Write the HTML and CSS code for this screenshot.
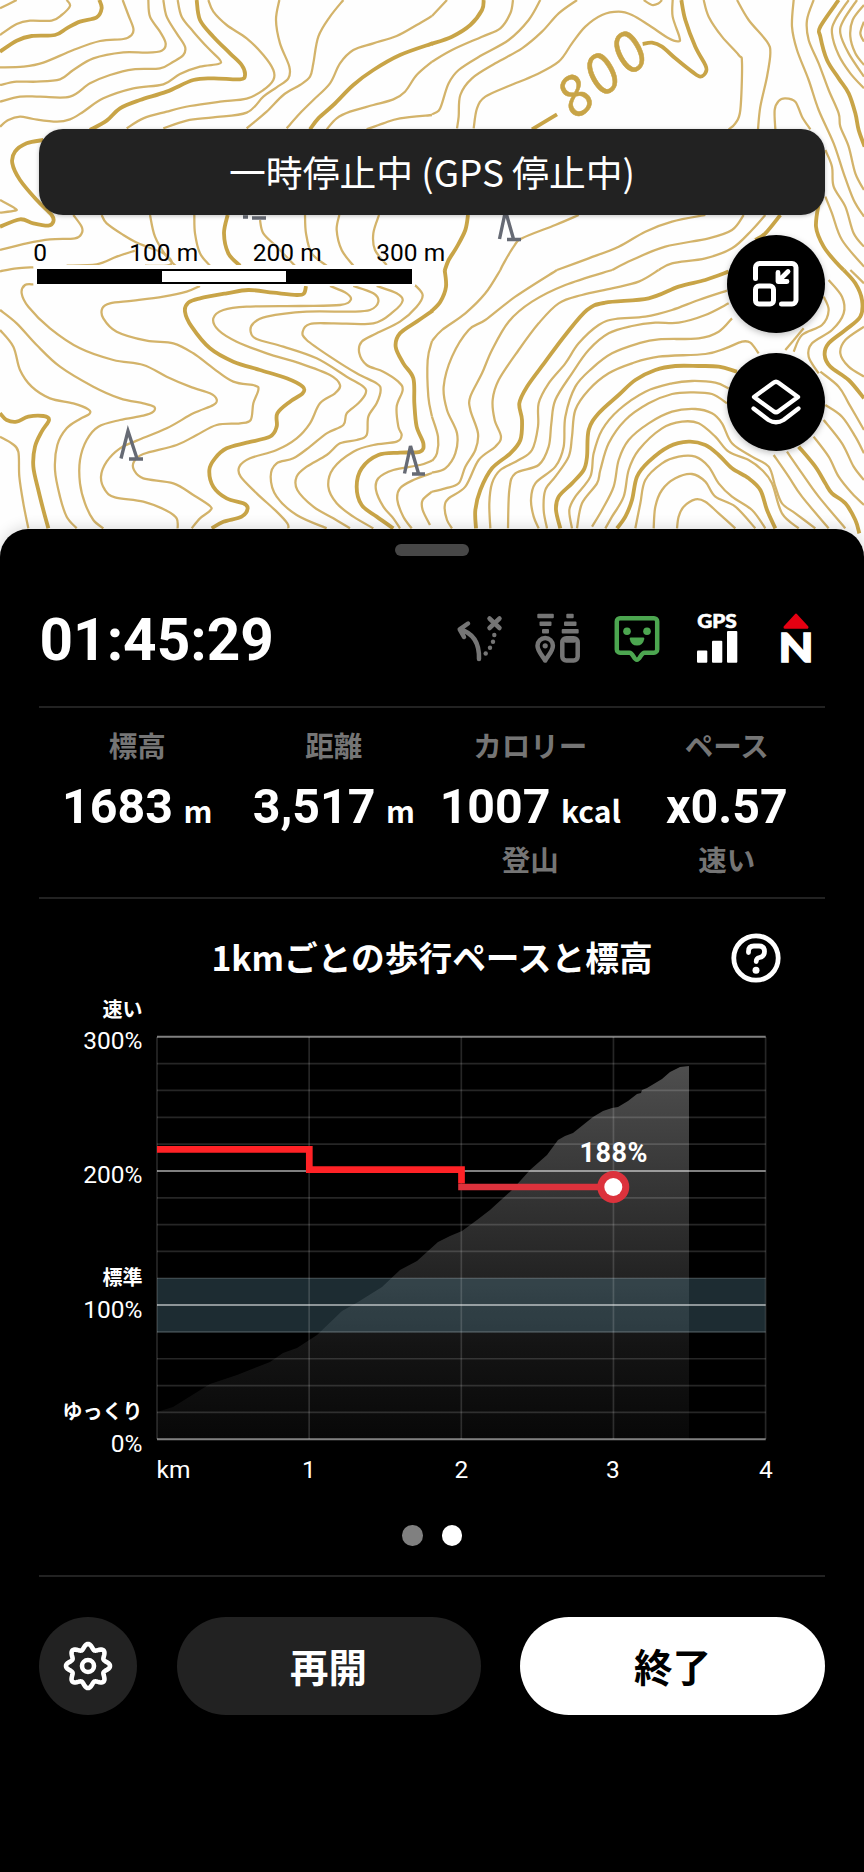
FILE: index.html
```html
<!DOCTYPE html>
<html lang="ja">
<head>
<meta charset="utf-8">
<meta name="viewport" content="width=device-width">
<title>活動記録</title>
<link rel="stylesheet" href="styles.css">
</head>
<body>
<main class="app">
  <section class="map">
    <svg class="map-canvas" viewBox="0 0 864 560" aria-hidden="true">
      <g id="contours"></g>
      <text class="contour-label" transform="translate(575 121) rotate(-39)">800</text>
      <g class="trees">
        <path d="M121 458.500L128 431L137 458.500M129 459H143"/>
        <path d="M404.500 473.500L410.500 446L418.500 473.500M412 474H425"/>
        <path d="M499.500 239L505.500 211L513.500 239M507 239.500H521"/>
        <path d="M243 217H248M252 218H266"/>
      </g>
    </svg>
    <div class="status-pill">一時停止中 (GPS 停止中)</div>
    <div class="map-tools">
      <div class="scale">
        <div class="scale-labels"><span>0</span><span>100 m</span><span>200 m</span><span>300 m</span></div>
        <div class="scale-track"><i></i><i class="light"></i><i></i></div>
      </div>
      <div class="fabs">
        <button class="fab" aria-label="縮小表示">
          <svg width="46" height="46" viewBox="0 0 46 46"><path d="M2.500 17.500V6.500a4 4 0 0 1 4-4h32.500a4 4 0 0 1 4 4v32.500a4 4 0 0 1-4 4H28.500"/><rect x="2.500" y="25" width="18" height="18" rx="3.500"/><path d="M35 10.500L25.500 20M25 11.500V20.500H34" stroke-width="4.800"/></svg>
        </button>
        <button class="fab" aria-label="レイヤー">
          <svg width="50" height="46" viewBox="0 0 50 46"><path d="M22.500 3.700a4 4 0 0 1 5 0L47 18 27.500 32.300a4 4 0 0 1-5 0L3 18Z" stroke-width="4.300"/><path d="M2.500 29.500L17.500 41Q25 45.500 32.500 41L47.500 29.500" stroke-width="4.300"/></svg>
        </button>
      </div>
    </div>
  </section>

  <section class="sheet">
    <div class="handle"></div>
    <header class="timer-row">
      <div class="timer">01:45:29</div>
      <div class="indicators">
        <svg class="muted" viewBox="0 0 56 56"><path d="M28 50C28.500 34 22 24 9 20.500M17 14.500L8.700 20.300L13 28" class="ln"/><path d="M38.500 9.500L48.500 19M48.500 9.500L38.500 19" class="ln"/><g class="fl"><circle cx="43.300" cy="26" r="2.200"/><circle cx="42" cy="32.700" r="2.200"/><circle cx="39" cy="38.700" r="2.200"/><circle cx="34.700" cy="44.500" r="2.200"/></g></svg>
        <svg class="muted" viewBox="0 0 56 56"><g class="fl"><rect x="7.300" y="4.800" width="16.500" height="4.500" rx="1"/><rect x="9.500" y="12.500" width="12" height="4.500" rx="1"/><rect x="12" y="20" width="7" height="4.500" rx="1"/><rect x="36.300" y="4.800" width="7.400" height="4.500" rx="1"/><rect x="34" y="12.500" width="12.500" height="4.500" rx="1"/><rect x="31.700" y="20" width="17" height="4.500" rx="1"/><circle cx="15.200" cy="36.800" r="2.600"/></g><path d="M15.200 51.500C12 46 7.500 42 7.500 36.700a7.700 7.700 0 0 1 15.400 0C22.900 42 18.500 46 15.200 51.500Z" class="ln" stroke-width="4"/><rect x="32.300" y="29.200" width="15.400" height="22.300" rx="4" class="ln" stroke-width="4"/><path d="M36 31.500H44" class="ln" stroke-width="3"/></svg>
        <svg class="green" viewBox="0 0 56 56"><path d="M11 9.200H45a3.200 3.200 0 0 1 3.200 3.200V40.500a3.200 3.200 0 0 1-3.200 3.200H35.500C32 43.700 31 50.700 27.900 50.700S24 43.700 20.500 43.700H11a3.200 3.200 0 0 1-3.200-3.200V12.400A3.200 3.200 0 0 1 11 9.200Z" class="ln"/><g class="fl"><circle cx="18" cy="22.200" r="3.800"/><circle cx="38" cy="22.200" r="3.800"/><path d="M21.500 28.500H34.500Q35.500 28.500 35.300 30A7.500 8.500 0 0 1 20.700 30Q20.500 28.500 21.500 28.500Z"/></g></svg>
        <svg class="white" viewBox="0 0 56 56"><text x="8.300" y="19" class="gps" textLength="39.500" lengthAdjust="spacingAndGlyphs">GPS</text><g class="fl"><rect x="8" y="41.500" width="10.300" height="12.300" rx="1"/><rect x="23" y="31.800" width="10.300" height="22" rx="1"/><rect x="38" y="22" width="10.300" height="31.800" rx="1"/></g></svg>
        <svg class="white" viewBox="0 0 56 56"><path d="M28 6.200L39 18.300H17Z" class="north"/><text x="10.500" y="53.200" class="compass" textLength="35" lengthAdjust="spacingAndGlyphs">N</text></svg>
      </div>
    </header>

    <div class="stats">
      <div class="stat"><span class="cap">標高</span><span class="val">1683<small>m</small></span></div>
      <div class="stat"><span class="cap">距離</span><span class="val">3,517<small>m</small></span></div>
      <div class="stat"><span class="cap">カロリー</span><span class="val">1007<small>kcal</small></span><span class="cap">登山</span></div>
      <div class="stat"><span class="cap">ペース</span><span class="val">x0.57</span><span class="cap">速い</span></div>
    </div>

    <div class="chart-head">
      <h2>1kmごとの歩行ペースと標高</h2>
      <svg class="help" width="50" height="50" viewBox="0 0 50 50"><circle cx="25" cy="25" r="22.200"/><path d="M17.500 19.500V18.500Q17.500 13 23 13H28Q33.500 13 33.500 18.500Q33.500 23.500 28.500 24.500Q25.200 25.200 25.200 28.500"/><circle cx="25" cy="37.300" r="3.500" class="dot"/></svg>
    </div>

    <svg class="chart" viewBox="0 990 864 510" role="img" aria-label="1kmごとの歩行ペースと標高">
      <defs><linearGradient id="rise" x1="0" y1="0" x2="0" y2="1"><stop offset="0" stop-color="#4e4e4e"/><stop offset=".5" stop-color="#282828"/><stop offset=".75" stop-color="#141414"/><stop offset="1" stop-color="#080808"/></linearGradient></defs>
      <path fill="url(#rise)" d="M157 1439V1412L173 1407 210 1384 237 1375 270 1362 283 1353 297 1348 317 1335 342 1311 358 1302 382 1287 400 1270 417 1261 438 1242 450 1236 462 1231 477 1220 490 1210 512 1190 530 1170 547 1155 558 1140 565 1136 573 1133 583 1125 593 1117 603 1111 612 1108 618 1107 628 1101 637 1094 641 1093 642 1090 647 1088 662 1079 670 1072 680 1067 689 1066V1439Z"/>
      <rect x="157" y="1278" width="608.500" height="54.500" class="band"/>
      <g id="grid"></g>
      <path class="pace" d="M157 1149.300H309.300V1169.700H461.500V1183.500"/>
      <path class="pace last" d="M458.200 1187H613"/>
      <circle cx="613.300" cy="1187" r="16" fill="#dc323c"/><circle cx="613.300" cy="1187" r="9" fill="#fff"/>
      <text class="peak" x="613.700" y="1162.300">188%</text>
      <g class="y-num"><text x="142.500" y="1049.300">300%</text><text x="142.500" y="1183.300">200%</text><text x="142.500" y="1317.600">100%</text><text x="142.500" y="1451.700">0%</text></g>
      <g class="y-word"><text x="142.500" y="1016.500">速い</text><text x="142.500" y="1284.500">標準</text><text x="142.500" y="1419">ゆっくり</text></g>
      <g class="x-num"><text x="156.500" y="1478.300" class="start">km</text><text x="309" y="1478.300">1</text><text x="461.500" y="1478.300">2</text><text x="613" y="1478.300">3</text><text x="766" y="1478.300">4</text></g>
    </svg>

    <div class="pager"><i></i><i class="on"></i></div>

    <footer class="actions">
      <button class="settings" aria-label="設定"><svg width="52" height="52" viewBox="-26 -26 52 52"><path id="gear"/><circle r="6"/></svg></button>
      <button class="resume">再開</button>
      <button class="finish">終了</button>
    </footer>
  </section>
</main>
<script src="script.js"></script>
</body>
</html>
```
FILE: styles.css
```css
* { box-sizing: border-box; }
body { margin: 0; background: #000; font-family: Roboto, "Noto Sans CJK JP", sans-serif; color: #fff; }
button { border: 0; padding: 0; margin: 0; font: inherit; }
.app { width: 864px; height: 1872px; overflow: hidden; display: flex; flex-direction: column; }

.map { position: relative; flex: none; height: 560px; padding: 129px 39px 0; background: #fefefe; display: flex; flex-direction: column; gap: 20px; }
.map-canvas { position: absolute; left: 0; top: 0; width: 864px; height: 560px; }
.thin { fill: none; stroke: #d3b36a; stroke-width: 6.800; stroke-linejoin: round; }
.bold { fill: none; stroke: #c8a447; stroke-width: 11.500; stroke-linejoin: round; }
.contour-label { font: italic 55px "Open Sans", sans-serif; letter-spacing: 4.500px; fill: #c8a447; stroke: #c8a447; stroke-width: .5; }
.trees path { fill: none; stroke: #666a74; stroke-width: 3.400; }
.status-pill { position: relative; height: 86px; border-radius: 24px; background: #222; display: flex; align-items: center; justify-content: center; font: 400 36.800px/84px "Noto Sans CJK JP", sans-serif; padding-bottom: 2px; box-shadow: 0 1px 4px rgba(0,0,0,.25); }
.map-tools { position: relative; display: flex; justify-content: space-between; }
.scale { width: 390px; color: #000; }
.scale-labels { display: grid; grid-template-columns: repeat(4, 123.500px); margin-left: -60.500px; padding-top: 3px; height: 30px; font-size: 24.500px; line-height: 30px; text-align: center; text-shadow: 0 0 2px #fff; white-space: nowrap; }
.scale-track { display: grid; grid-template-columns: 125px 124px 126px; margin-left: -5px; width: 381px; height: 21px; padding: 4px 3px 2px; background: #fff; }
.scale-track i { background: #000; }
.scale-track .light { background: #fff; border: solid #000; border-width: 2.500px 0; }
.fabs { display: flex; flex-direction: column; gap: 20px; }
.fab { width: 98px; height: 98px; border-radius: 50%; background: #000; display: flex; align-items: center; justify-content: center; box-shadow: 0 2px 6px rgba(0,0,0,.25); }
.fab svg { fill: none; stroke: #fff; stroke-width: 5; stroke-linecap: round; stroke-linejoin: round; }

.sheet { position: relative; flex: 1; margin-top: -31px; padding: 15px 39px 0; border-radius: 28px 28px 0 0; background: #000; box-shadow: 0 -2px 14px rgba(0,0,0,.14); display: flex; flex-direction: column; }
.handle { width: 74px; height: 12px; border-radius: 6px; background: #474747; margin: 0 auto; flex: none; }
.timer-row { height: 152px; flex: none; padding-top: 53px; border-bottom: 2px solid #222; display: flex; justify-content: space-between; }
.timer { font-weight: 700; font-size: 58.500px; line-height: 62px; margin-left: .5px; }
.indicators { display: flex; gap: 23.300px; margin-right: 1px; }
.indicators svg { width: 56px; height: 56px; overflow: visible; }
.muted { --c: #757575; }
.green { --c: #4ca650; }
.white { --c: #fff; }
.ln { fill: none; stroke: var(--c); stroke-width: 4.500; stroke-linecap: round; stroke-linejoin: round; }
.fl { fill: var(--c); }
.gps { font: 900 19px Lato, sans-serif; fill: #fff; stroke: #fff; stroke-width: .6; }
.compass { font: 900 40px Lato, sans-serif; fill: #fff; stroke: #fff; stroke-width: 1.400; }
.north { fill: #e60012; stroke: #e60012; stroke-width: 3; stroke-linejoin: round; }

.stats { height: 191px; flex: none; border-bottom: 2px solid #222; display: grid; grid-template-columns: repeat(4, 1fr); padding-top: 17px; }
.stat { display: flex; flex-direction: column; align-items: center; white-space: nowrap; }
.cap { font: 700 28.500px/40px "Noto Sans CJK JP", sans-serif; color: #757575; }
.val { font-weight: 700; font-size: 48.300px; line-height: 60px; height: 74px; padding-top: 12px; }
.val small { font: 700 30px "Noto Sans CJK JP", sans-serif; line-height: 1; margin-left: 10.500px; }

.chart-head { position: relative; height: 91px; flex: none; padding-top: 14px; display: flex; justify-content: center; }
.chart-head h2 { margin: 0; font: 700 33.700px/88px "Noto Sans CJK JP", sans-serif; white-space: nowrap; }
.help { position: absolute; left: 692px; top: 34px; fill: none; stroke: #fff; stroke-width: 4.800; stroke-linecap: round; stroke-linejoin: round; }
.help .dot { fill: #fff; stroke: none; }
.chart { width: 864px; height: 510px; margin-left: -39px; flex: none; }
.band { fill: rgba(95,145,165,.3); }
.minor { stroke: rgba(255,255,255,.15); stroke-width: 1.700; }
.major { stroke: rgba(255,255,255,.5); stroke-width: 2; }
.pace { fill: none; stroke: #ff2226; stroke-width: 6.700; }
.pace.last { stroke: #dc323c; }
.chart text { fill: #fff; font-size: 24.500px; }
.y-num text { text-anchor: end; }
.chart .y-word text { text-anchor: end; font: 700 20px "Noto Sans CJK JP", sans-serif; }
.x-num text { text-anchor: middle; }
.x-num .start { text-anchor: start; }
.chart .peak { font-size: 27px; font-weight: 700; text-anchor: middle; letter-spacing: .5px; }

.pager { display: flex; justify-content: center; gap: 19px; padding-top: 25px; height: 75px; flex: none; }
.pager i { width: 20.500px; height: 20.500px; border-radius: 50%; background: #808080; }
.pager .on { background: #fff; }

.actions { border-top: 2px solid #222; padding-top: 40px; display: grid; grid-template-columns: 98px 304px 305px; gap: 39.500px; }
.actions button { height: 98px; border-radius: 49px; background: #222; color: #fff; font: 700 38.500px/90px "Noto Sans CJK JP", sans-serif; padding-bottom: 3px; }
.actions .finish { background: #fff; color: #000; }
.actions .settings { display: flex; align-items: center; justify-content: center; padding: 0; }
.settings svg { fill: none; stroke: #fff; stroke-width: 4.600; stroke-linejoin: round; }
```
FILE: script.js
```js
// Contour lines, digitised in four tiles at three units per pixel.
// A leading "*" marks an index (bold) contour.
const tiles = [
  { x: 0, y: 0, lines: `
0,25 50,0
200,0 210,18 185,45 155,62 90,62 50,72 0,105
*298,0 305,25 290,52 240,65 200,85 165,105 95,108 50,122 0,155
368,0 385,45 400,85 395,105 370,117 300,123 220,150 130,188 70,200 0,202
445,0 450,50 480,95 497,130 485,152 440,158 370,157 280,175 220,210 180,238 110,245 50,245 0,255
490,0 500,50 530,100 555,140 550,165 520,185 480,205 400,208 330,225 270,250 210,290 120,290 60,290 0,305
533,0 545,50 580,95 625,145 660,180 655,192 600,200 540,222 490,253 400,265 310,295 250,335 210,358 170,365 100,357 60,350 25,360 0,380
*590,0 600,60 640,110 690,160 725,195 735,225 720,238 640,235 580,240 500,275 420,300 360,325 320,362 270,390
625,0 640,35 680,75 740,115 790,165 820,210 820,240 790,270 740,296 660,305 570,318 500,335 430,355 380,385
838,0 828,60 840,130 868,200 865,235 830,262 790,290 740,338 640,352 560,362 490,385
1030,0 990,50 955,110 940,190 930,230 900,255 850,285 800,335 740,385
1296,48 1250,75 1190,108 1120,130 1060,150 1020,190 990,250 940,300 900,340 860,385
*1298,130 1200,165 1120,210 1060,255 1000,315 955,355 930,388
1296,185 1250,225 1215,275 1180,298 1120,315 1050,335 1010,355 980,388
1296,345 1200,355 1150,370 1100,388
*130,420 80,430 45,455 37,490 60,540 110,600 155,645 160,665 145,677 100,670 60,658 0,680
0,600 45,625 45,632 0,638
220,645 245,680 245,700 225,715 150,718 80,730 0,750
305,645 320,670 370,705 405,725 440,740 490,760 515,785 500,797 435,797
405,752 350,770 290,793 200,797
100,802 50,805 0,814
450,645 465,710 500,770 530,800
583,645 585,700 600,760 630,797
*683,645 672,700 685,760 720,797
780,660 790,700 830,740 885,797
915,645 918,700 935,760 980,797
1018,645 1010,690 1025,750 1060,797
1137,645 1120,700 1125,750 1160,795` },
  { x: 432, y: 0, lines: `
0,48 45,0
*155,0 150,30 115,75 60,110 -2,132
243,0 235,40 205,85 150,110 60,150 0,185
325,0 290,60 230,120 150,165 80,210 50,250 30,310 20,332 0,343
435,0 380,40 330,95 270,145 190,190 120,235 85,285 80,350 75,385
722,0 722,50 742,110 740,124 710,115 650,75 600,45 560,35 510,45 460,80 420,130 380,185 310,225 230,258 160,290 135,325 125,385
635,0 660,15 680,10 690,0
*748,0 760,60 790,140 820,195 822,215 805,230 780,215 730,175 690,140 660,128 632,132
*300,388 375,343
815,0 830,50 870,110 920,165 930,190 925,330 910,370 890,388
915,0 950,60 1005,125 1015,160 1005,230 985,320 978,388
1085,0 1080,80 1095,150 1130,240 1160,330 1205,430 1235,520 1265,600 1296,650
1145,0 1125,60 1130,120 1160,190 1190,270 1220,340 1225,380 1250,440 1270,520 1296,570
*1220,0 1165,80 1165,110 1185,180 1220,235 1250,280 1270,340 1280,390 1298,440
1250,0 1210,60 1200,100 1220,165 1255,220 1296,265
1275,0 1235,60 1225,100 1250,160 1296,230
1296,15 1262,60 1255,110 1270,160 1296,195
1296,65 1285,100 1296,125
1030,388 1028,330 1040,303 1060,295 1090,305 1110,350 1135,388
1180,450 1200,500 1205,560 1240,620 1265,700 1296,740
1180,590 1200,640 1230,720 1296,800
*1162,600 1152,680 1175,740 1215,790 1235,810
*108,645 100,690 75,740 50,780 38,812
440,645 370,675 270,715 245,740 215,790 205,810
820,645 720,665 640,695 560,740 470,775 375,810
935,645 900,690 830,715 700,740 600,780 540,810
1000,645 960,690 900,745 820,775 720,790 680,810
*1045,645 1000,700 970,720` },
  { x: 0, y: 270, lines: `
0,120 50,160 110,225 180,290 280,350 360,385 430,400 462,410 460,425 430,437 360,450 295,470 260,510 240,570 240,640 255,700 280,750 310,775
0,180 40,230 60,300 95,350 150,385 220,400 265,418 268,432 240,447 200,475 172,525 165,600 180,680 200,740 230,775
*0,430 20,450 50,455 85,440 130,438 147,450 125,485 105,530 100,590 115,660 130,720 145,775
0,500 35,520 55,545 58,620 70,700 85,775
100,43 75,45 65,70 85,110 150,175 240,235 340,270 430,285 500,320 570,350 630,370 650,388 640,405 580,430 500,475 410,512 360,535 320,575 303,620 315,660 345,682 430,695 500,722 530,745 533,775
600,48 560,65 490,80 400,92 330,100 307,115 310,145 350,185 440,212 520,220 580,250 640,295 700,335 765,347 775,360 760,400 752,450 720,460 650,465 590,495 530,525 430,552 402,575 402,600 430,625 520,640 580,675 630,708 630,722 600,745 575,775
*918,48 912,70 890,75 820,68 745,60 680,70 600,85 565,98 555,125 575,170 630,235 700,275 780,300 860,325 908,350 908,370 870,395 832,430 830,470 810,500 740,518 680,535 645,565 628,600 640,650 680,685 730,700 743,715 725,740 670,755 635,775
990,48 1040,70 1052,90 1020,105 900,108 740,110 670,120 640,145 655,180 710,215 800,250 900,280 990,315 1020,345 1005,370 960,400 930,460 890,505 830,540 750,565 718,590 722,620 770,670 830,725 862,760 865,775
1060,48 1120,70 1135,95 1110,120 1050,125 920,125 800,140 760,160 752,185 770,207 850,230 950,265 1040,320 1090,350 1097,370 1075,400 1040,430 1030,465 980,490 930,530 880,565 830,580 812,620 830,680 890,735 980,775
1130,48 1190,70 1208,92 1180,125 1120,160 1000,160 930,162 908,185 920,210 990,260 1070,310 1130,340 1142,360 1130,400 1105,440 1100,495 1070,510 1020,520 980,555 920,590 890,620 892,660 940,710 1000,745 1050,775
1245,45 1268,75 1250,110 1200,155 1130,190 1085,215 1078,250 1100,285 1150,305 1195,335 1208,360 1190,410 1195,470 1205,495 1190,515 1120,525 1060,545 1000,595 985,650 1010,700 1060,740 1120,775
*1298,122 1250,155 1200,190 1187,230 1210,280 1240,325 1243,400 1250,470 1270,520 1260,545 1200,548 1135,555 1085,595 1070,650 1085,705 1130,740 1180,775
1296,572 1260,585 1180,600 1135,625 1128,660 1150,710 1180,745 1200,775
1296,609 1240,630 1200,655 1192,690 1210,740 1235,775
1296,665 1268,690 1268,720 1290,765
1296,213 1283,270 1285,380 1296,440` },
  { x: 432, y: 270, lines: `
*38,0 42,50 25,95 -2,124
0,440 18,500 15,550 0,573
205,0 160,70 100,130 30,180 0,213
375,0 250,80 160,150 110,180 60,260 35,350 45,420 75,490 70,550 40,595 0,608
540,0 400,45 300,95 230,155 180,240 150,310 115,380 115,420 138,490 130,540 100,590 80,640 40,655 0,665
680,0 620,35 540,55 450,75 380,100 320,160 260,240 200,330 182,390 188,450 207,500 190,530 140,570 100,650 50,685 38,710 45,750 60,775
*890,5 820,30 740,50 650,85 520,98 465,120 400,195 340,275 285,350 262,400 270,450 265,510 235,550 180,595 145,660 130,720 132,775
885,62 800,90 720,120 640,140 550,147 500,165 440,220 400,280 350,340 320,400 318,470 300,540 260,570 205,600 180,640 172,700 175,775
890,100 820,135 740,158 670,158 600,168 530,190 470,240 420,310 370,390 358,460 350,530 320,585 250,610 232,660 228,775
900,145 860,185 800,205 680,208 620,220 540,250 480,295 430,350 400,440 395,530 370,590 310,640 297,690 305,740 320,775
980,250 955,218 930,215 880,235 820,252 680,260 600,280 530,310 470,360 430,420 420,500 410,560 370,620 340,660 335,720 345,775
*915,305 860,290 800,288 730,288 670,300 610,330 560,375 500,430 470,480 465,560 455,600 420,640 380,680 372,720 385,775
890,355 850,338 780,333 720,340 640,365 560,420 510,480 485,550 475,620 430,680 412,720 420,775
885,400 840,372 780,367 720,372 650,400 580,450 530,520 505,600 495,640 450,700 435,775
1150,775 1090,730 1050,700 1030,650 1010,590 960,560 900,520 870,460 840,430 790,417 720,425 650,460 590,510 560,570 545,650 510,720 480,770
1100,775 1050,730 1020,640 990,600 950,570 890,545 850,500 800,460 750,455 690,475 620,540 590,600 575,680 540,740 520,775
*1030,775 1005,720 985,660 950,625 900,595 860,555 820,525 770,515 710,530 650,575 615,620 600,690 580,740 555,775
1000,775 960,720 900,680 860,640 830,590 790,560 740,560 690,580 640,630 625,700 610,775
970,775 910,710 850,680 820,635 780,612 730,625 690,660 670,710 665,775
910,775 860,730 820,695 790,688 755,710 740,740 735,775
*1100,530 1150,590 1180,640 1200,670 1240,700 1270,750 1282,790
1025,555 1070,620 1110,680 1190,775
1065,545 1110,610 1160,680 1240,775
1145,500 1190,560 1220,620 1260,670 1296,705
1175,450 1230,520 1265,590 1296,630
1180,405 1230,440 1270,500 1296,550
1165,305 1220,350 1250,400 1296,480
*1235,0 1270,40 1290,90 1285,140 1240,180 1190,220 1178,255 1195,290 1250,330 1296,385
1190,30 1230,80 1235,130 1200,180 1140,220 1130,260 1160,310
1175,80 1190,120 1170,165 1110,195 1085,245
1115,175 1060,240
1296,170 1240,210 1225,250 1250,290 1296,320
1255,0 1296,40` }
];

const NS = "http://www.w3.org/2000/svg";
function add(parent, tag, attrs) {
  const el = document.createElementNS(NS, tag);
  for (const key in attrs) el.setAttribute(key, attrs[key]);
  return parent.appendChild(el);
}

// Catmull-Rom spline through the points
function spline(p) {
  let d = `M${p[0]}`;
  for (let i = 0; i < p.length - 1; i++) {
    const a = p[i - 1] || p[i], b = p[i], c = p[i + 1], e = p[i + 2] || c;
    d += `C${b[0] + (c[0] - a[0]) / 6},${b[1] + (c[1] - a[1]) / 6} ${c[0] - (e[0] - b[0]) / 6},${c[1] - (e[1] - b[1]) / 6} ${c}`;
  }
  return d;
}

const contours = document.getElementById("contours");
for (const tile of tiles) {
  const g = add(contours, "g", { transform: `translate(${tile.x} ${tile.y}) scale(${1 / 3})` });
  for (const line of tile.lines.trim().split("\n")) {
    const bold = line[0] === "*";
    const pts = line.replace("*", "").split(" ").map(s => s.split(",").map(Number));
    add(g, "path", { d: spline(pts), class: bold ? "bold" : "thin" });
  }
}

const grid = document.getElementById("grid");
for (let i = 0; i <= 15; i++) {
  const y = 1036.8 + i * 26.83;
  add(grid, "line", { x1: 157, x2: 765.7, y1: y, y2: y, class: i % 5 ? "minor" : "major" });
}
for (let i = 0; i <= 4; i++) {
  const x = 157 + i * 152.15;
  add(grid, "line", { x1: x, x2: x, y1: 1037, y2: 1439, class: "minor" });
}

// Gear outline: eight rounded teeth
let gear = "";
for (let i = 0; i <= 160; i++) {
  const t = i / 160 * 2 * Math.PI;
  const r = 19.4 + 2.6 * Math.cos(8 * t);
  gear += `${i ? "L" : "M"}${(r * Math.sin(t)).toFixed(2)} ${(-r * Math.cos(t)).toFixed(2)}`;
}
document.getElementById("gear").setAttribute("d", gear + "Z");
```
